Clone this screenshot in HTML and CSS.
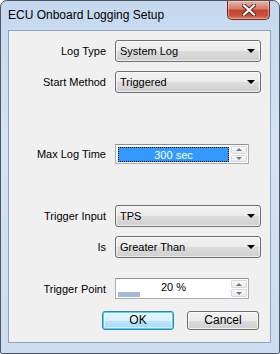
FILE: index.html
```html
<!DOCTYPE html>
<html lang="en">
<head>
    <meta charset="UTF-8">
    <title>ECU Onboard Logging Setup</title>
    <link rel="stylesheet" href="styles.css">
</head>
<body>
    <div class="window">
        <div class="titlebar">
            <span class="title">ECU Onboard Logging Setup</span>
            <div class="close">
                <svg width="14" height="12" viewBox="0 0 14 12">
                    <path d="M2 1.5 L12 10.5 M12 1.5 L2 10.5" stroke="#5a2018" stroke-width="4" stroke-linecap="square"/>
                    <path d="M2 1.5 L12 10.5 M12 1.5 L2 10.5" stroke="#fff" stroke-width="2.2" stroke-linecap="square"/>
                </svg>
            </div>
        </div>

        <div class="client">
            <div class="row row-log">
                <span class="label">Log Type</span>
                <div class="combo">System Log<span class="arrow"></span></div>
            </div>
            <div class="row row-start">
                <span class="label">Start Method</span>
                <div class="combo">Triggered<span class="arrow"></span></div>
            </div>
            <div class="row row-max">
                <span class="label">Max Log Time</span>
                <div class="numeric">
                    <div class="value selected">300 sec</div>
                    <div class="spin">
                        <div class="spin-btn"><span class="up"></span></div>
                        <div class="spin-btn"><span class="down"></span></div>
                    </div>
                </div>
            </div>
            <div class="row row-input">
                <span class="label">Trigger Input</span>
                <div class="combo">TPS<span class="arrow"></span></div>
            </div>
            <div class="row row-is">
                <span class="label">Is</span>
                <div class="combo">Greater Than<span class="arrow"></span></div>
            </div>
            <div class="row row-point">
                <span class="label">Trigger Point</span>
                <div class="numeric tall">
                    <div class="value">
                        <span>20 %</span>
                        <div class="bar"><div class="bar-fill" style="width: 20%"></div></div>
                    </div>
                    <div class="spin">
                        <div class="spin-btn"><span class="up"></span></div>
                        <div class="spin-btn"><span class="down"></span></div>
                    </div>
                </div>
            </div>
            <div class="buttons">
                <div class="btn btn-default">OK</div>
                <div class="btn">Cancel</div>
            </div>
        </div>
    </div>
</body>
</html>
```

FILE: styles.css
```css
* {
    margin: 0;
    padding: 0;
    box-sizing: border-box;
}

body {
    font-family: 'Liberation Sans', Arial, sans-serif;
    background-color: #fff;
    width: 280px;
    height: 354px;
}

.window {
    width: 280px;
    height: 354px;
    border: 1px solid #4d5866;
    border-radius: 7px 7px 2px 2px;
    background: linear-gradient(#c5d8ee, #d6e4f4 40%, #cddcee);
    display: flex;
    flex-direction: column;
    padding: 0 8px 10px 7px;
}

.titlebar {
    height: 29px;
    display: flex;
    align-items: flex-start;
}

.title {
    font-size: 12px;
    line-height: 16px;
    color: #000;
    padding-top: 6px;
}

.close {
    margin-left: auto;
    margin-right: 1px;
    width: 43px;
    height: 19px;
    border: 1px solid #6d2a22;
    border-top: none;
    border-radius: 0 0 5px 5px;
    background: linear-gradient(#e8b3a8, #d47a68 45%, #c24631 50%, #c8503a 80%, #d9806c);
    box-shadow: inset 0 0 0 1px rgba(255, 220, 210, 0.45);
    display: flex;
    align-items: center;
    justify-content: center;
}

.client {
    flex: 1;
    border: 1px solid #8fa3bd;
    background-color: #f0f0f0;
    font-size: 11px;
    color: #000;
    display: flex;
    flex-direction: column;
}

.row {
    display: flex;
    align-items: center;
}

.label {
    width: 97px;
    text-align: right;
    margin-right: 9px;
}

.row-log { margin-top: 9px; }
.row-start { margin-top: 9px; }
.row-max { margin-top: 51px; }
.row-input { margin-top: 41px; }
.row-is { margin-top: 9px; }
.row-point { margin-top: 20px; }

.combo {
    position: relative;
    width: 146px;
    height: 22px;
    line-height: 20px;
    padding-left: 4px;
    border: 1px solid #707070;
    border-radius: 3px;
    background: linear-gradient(#f2f2f2, #ebebeb 50%, #dddddd 50%, #cfcfcf);
    box-shadow: inset 0 0 0 1px rgba(255, 255, 255, 0.6);
}

.arrow {
    position: absolute;
    right: 5px;
    top: 8px;
    width: 0;
    height: 0;
    border-left: 4px solid transparent;
    border-right: 4px solid transparent;
    border-top: 4px solid #000;
}

.numeric {
    width: 134px;
    height: 20px;
    border: 1px solid #abadb3;
    border-top-color: #8e9094;
    background-color: #fff;
    display: flex;
    padding: 1px;
}

.numeric.tall {
    height: 21px;
}

.value {
    flex: 1;
    text-align: center;
    line-height: 14px;
    position: relative;
}

.value.selected {
    background-color: #3399ff;
    color: #fff;
    border: 1px dotted #000;
    margin: 1px 1px 0 1px;
}

.bar {
    position: absolute;
    left: 1px;
    right: 0;
    bottom: 0;
    height: 5px;
}

.bar-fill {
    height: 100%;
    background-color: #a7bad3;
}

.spin {
    width: 16px;
    display: flex;
    flex-direction: column;
    gap: 1px;
    margin-left: 1px;
}

.spin-btn {
    flex: 1;
    border: 1px solid #d6d9de;
    border-radius: 1px;
    background: linear-gradient(#fafafa, #eaeaea);
    display: flex;
    align-items: center;
    justify-content: center;
}

.up,
.down {
    width: 0;
    height: 0;
    border-left: 3px solid transparent;
    border-right: 3px solid transparent;
}

.up {
    border-bottom: 3px solid #6e7a8a;
}

.down {
    border-top: 3px solid #6e7a8a;
}

.buttons {
    margin-top: 12px;
    display: flex;
    padding-left: 93px;
    gap: 13px;
}

.btn {
    width: 72px;
    height: 19px;
    line-height: 17px;
    text-align: center;
    font-size: 12px;
    border: 1px solid #707070;
    border-radius: 3px;
    background: linear-gradient(#f2f2f2, #ebebeb 50%, #dddddd 50%, #cfcfcf);
    box-shadow: inset 0 0 0 1px rgba(255, 255, 255, 0.7);
}

.btn-default {
    border-color: #3c7fb1;
    background: linear-gradient(#eaf6fd, #d9f0fc 50%, #bee6fd 50%, #a7d9f5);
    box-shadow: inset 0 0 0 1px #48d4f4, inset 0 0 0 2px rgba(255, 255, 255, 0.5);
}
```
